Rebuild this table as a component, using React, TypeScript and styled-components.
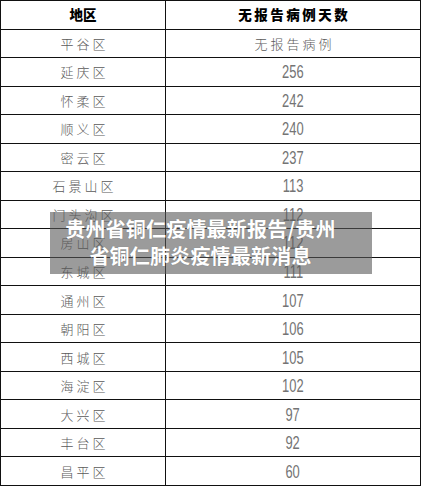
import React from "react";
import styled, { createGlobalStyle } from "styled-components";

const Global = createGlobalStyle`
  html, body { margin: 0; padding: 0; background: #fff; }
  body { font-family: "Noto Sans CJK SC", "Noto Sans", sans-serif; }
`;

const Page = styled.div`
  position: relative;
  width: 424px;
  height: 487px;
  overflow: hidden;
  background: #fff;
`;

const Table = styled.div`
  box-sizing: border-box;
  width: 421px;
  height: 486px;
  display: grid;
  grid-template-columns: 165px 1fr;
  grid-template-rows: repeat(17, 1fr);
  border-left: 1px solid #111;
  border-top: 1px solid #111;
`;

const Cell = styled.div`
  box-sizing: border-box;
  border-right: 1px solid #111;
  border-bottom: 1px solid #111;
  display: flex;
  align-items: center;
  justify-content: center;
  overflow: hidden;
`;

const HeadText = styled.span<{ $spacing?: number }>`
  font-family: "Noto Sans CJK SC", sans-serif;
  font-weight: 900;
  font-size: 13.5px;
  color: #000;
  letter-spacing: ${(p) => p.$spacing ?? 0}px;
  padding-left: ${(p) => p.$spacing ?? 0}px;
  line-height: 1;
`;

const CnText = styled.span`
  font-family: "Noto Sans CJK SC", sans-serif;
  font-weight: 300;
  font-size: 13px;
  color: #5a5a5a;
  letter-spacing: 3px;
  padding-left: 3px;
  line-height: 1;
`;

const NumText = styled.span`
  display: inline-block;
  font-family: "Liberation Sans", Arial, sans-serif;
  font-size: 19px;
  color: #747474;
  line-height: 1;
  transform: scaleX(0.68);
`;

const Banner = styled.div`
  position: absolute;
  left: 50px;
  top: 212px;
  width: 322px;
  height: 62px;
  box-sizing: border-box;
  padding: 3px 26px 0 5px;
  background: rgba(88, 88, 88, 0.6);
  color: #fff;
  font-family: "Noto Sans CJK SC", sans-serif;
  font-weight: 700;
  font-size: 20px;
  line-height: 27px;
  letter-spacing: 0.2px;
  text-align: center;
  text-shadow: 0 0 1px rgba(0, 0, 0, 0.25);
`;

const rows: [string, string][] = [
  ["平谷区", "无报告病例"],
  ["延庆区", "256"],
  ["怀柔区", "242"],
  ["顺义区", "240"],
  ["密云区", "237"],
  ["石景山区", "113"],
  ["门头沟区", "112"],
  ["房山区", "112"],
  ["东城区", "111"],
  ["通州区", "107"],
  ["朝阳区", "106"],
  ["西城区", "105"],
  ["海淀区", "102"],
  ["大兴区", "97"],
  ["丰台区", "92"],
  ["昌平区", "60"],
];

export default function App() {
  return (
    <>
      <Global />
      <Page>
        <Table>
          <Cell>
            <HeadText>地区</HeadText>
          </Cell>
          <Cell>
            <HeadText $spacing={2.5}>无报告病例天数</HeadText>
          </Cell>
          {rows.map(([area, days]) => (
            <React.Fragment key={area + days}>
              <Cell>
                <CnText>{area}</CnText>
              </Cell>
              <Cell>
                {/^\d+$/.test(days) ? <NumText>{days}</NumText> : <CnText>{days}</CnText>}
              </Cell>
            </React.Fragment>
          ))}
        </Table>
        <Banner>
          贵州省铜仁疫情最新报告/贵州
          <br />
          省铜仁肺炎疫情最新消息
        </Banner>
      </Page>
    </>
  );
}
